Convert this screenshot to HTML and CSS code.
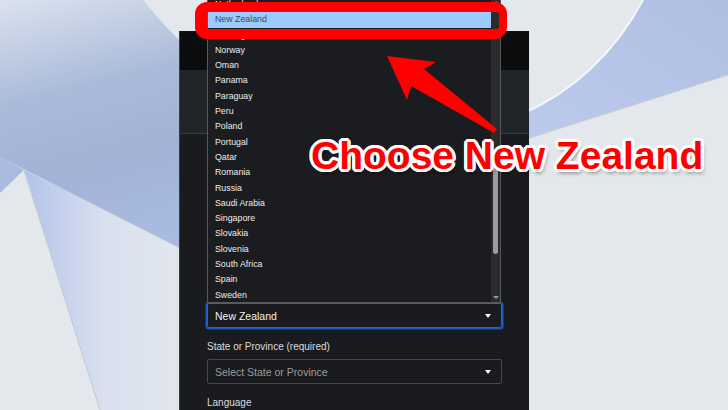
FILE: index.html
```html
<!DOCTYPE html>
<html lang="en">
<head>
  <meta charset="UTF-8" />
  <meta name="viewport" content="width=device-width, initial-scale=1.0"/>
  <title>Choose New Zealand</title>
  <link rel="stylesheet" href="styles.css">
</head>
<body>
  <svg class="wallpaper" width="728" height="410" viewBox="0 0 728 410">
    <defs>
      <linearGradient id="bandLeft" x1="0" y1="0" x2="0.2" y2="1">
        <stop offset="0" stop-color="#dbe2ee"/>
        <stop offset="0.4" stop-color="#aabbda"/>
        <stop offset="0.7" stop-color="#a1b2d5"/>
        <stop offset="1" stop-color="#a9bae0"/>
      </linearGradient>
      <linearGradient id="wedge" x1="0" y1="0" x2="1" y2="0">
        <stop offset="0" stop-color="#b2c3ea"/>
        <stop offset="0.45" stop-color="#d9e0ee"/>
        <stop offset="1" stop-color="#e4e8ee"/>
      </linearGradient>
      <linearGradient id="bandRight" x1="0" y1="1" x2="1" y2="0">
        <stop offset="0" stop-color="#bccbec"/>
        <stop offset="1" stop-color="#afbfe2"/>
      </linearGradient>
    </defs>
    <rect width="728" height="410" fill="#e4e7eb"/>
    <path d="M0 0 H143 Q165 28 200 60 L200 258 L0 157 Z" fill="url(#bandLeft)"/>
    <path d="M0 157 L24 170 L0 193 Z" fill="#a9bbe0"/>
    <path d="M24 170 L200 258 L200 410 L100 410 Z" fill="url(#wedge)"/>
    <path d="M24 170 L100 410" stroke="#c3c7cf" stroke-width="1"/>
    <path d="M0 157 L200 258" stroke="#b9c0cc" stroke-width="1"/>
    <path d="M643 0 Q600 80 520 115 L520 141 L728 75 V0 Z" fill="url(#bandRight)"/>
    <path d="M643 0 Q600 80 520 115" stroke="#f5f7f9" stroke-width="2" fill="none"/>
    <path d="M520 141 L728 75" stroke="#c8ccd3" stroke-width="1"/>
  </svg>

  <div class="window">
    <div class="titlebar"></div>
    <div class="toolbar"></div>
    <div class="form">
      <div class="field">
        <div class="select focused">
          <span>New Zealand</span>
          <span class="caret"></span>
        </div>
      </div>
      <div class="field">
        <label>State or Province (required)</label>
        <div class="select">
          <span class="placeholder">Select State or Province</span>
          <span class="caret"></span>
        </div>
      </div>
      <div class="field">
        <label>Language</label>
      </div>
    </div>
  </div>

  <div class="dropdown">
    <ul class="options">
      <li>Netherlands</li>
      <li class="active">New Zealand</li>
      <li>Nicaragua</li>
      <li>Norway</li>
      <li>Oman</li>
      <li>Panama</li>
      <li>Paraguay</li>
      <li>Peru</li>
      <li>Poland</li>
      <li>Portugal</li>
      <li>Qatar</li>
      <li>Romania</li>
      <li>Russia</li>
      <li>Saudi Arabia</li>
      <li>Singapore</li>
      <li>Slovakia</li>
      <li>Slovenia</li>
      <li>South Africa</li>
      <li>Spain</li>
      <li>Sweden</li>
    </ul>
    <div class="scrollbar">
      <span class="arrow-up"></span>
      <span class="thumb"></span>
      <span class="arrow-down"></span>
    </div>
  </div>

  <div class="callout-box"></div>
  <svg class="callout-arrow" width="728" height="410" viewBox="0 0 728 410">
    <polygon points="387,56 436,62 424,69 497,129 494,133 411,86 407,100" fill="#ff0000"/>
  </svg>
  <div class="callout-text">Choose New Zealand</div>
</body>
</html>
```

FILE: styles.css
```css
* {
  margin: 0;
  padding: 0;
  box-sizing: border-box;
}

body {
  font-family: 'Liberation Sans', Arial, sans-serif;
  width: 728px;
  height: 410px;
  overflow: hidden;
  padding: 31px 0 0 179px;
  position: relative;
  background: #e4e7eb;
}

.wallpaper {
  position: absolute;
  top: 0;
  left: 0;
  z-index: 0;
}

.window {
  position: relative;
  z-index: 1;
  width: 350px;
  height: 379px;
  overflow: hidden;
  background-color: #1a1b1e;
  border-left: 1px solid #3a3b3e;
}

.titlebar {
  height: 39px;
  background-color: #0b0c0e;
}

.toolbar {
  height: 64px;
  background-color: #212428;
  border-bottom: 1px solid #393c40;
}

.form {
  padding: 169px 27px 0 27px;
  display: flex;
  flex-direction: column;
  gap: 13px;
}

label {
  display: block;
  font-size: 10px;
  line-height: 12px;
  color: #dcdcdc;
  margin-bottom: 6px;
}

.select {
  height: 25px;
  border: 1px solid #45484c;
  border-radius: 2px;
  display: flex;
  align-items: center;
  justify-content: space-between;
  padding: 0 7px 0 7px;
  font-size: 10.5px;
  color: #f0f0f0;
}

.select.focused {
  border-color: #5a5d62;
  box-shadow: 0 0 0 1.5px #1c55c4;
}

.placeholder {
  color: #9a9b9d;
}

.caret {
  width: 0;
  height: 0;
  border-left: 3.5px solid transparent;
  border-right: 3.5px solid transparent;
  border-top: 4px solid #f2f2f2;
  margin-right: 3px;
}

/* open list of the country select */
.dropdown {
  position: absolute;
  z-index: 2;
  left: 207px;
  top: -4px;
  width: 294px;
  height: 307px;
  background-color: #1b1c1f;
  border: 1px solid #57585b;
  display: flex;
}

.options {
  list-style: none;
  flex: 1;
  overflow: hidden;
}

.options li {
  height: 15.3px;
  line-height: 15.3px;
  padding-left: 7px;
  font-size: 8.8px;
  color: #ececec;
  white-space: nowrap;
}

.options li.active {
  background-color: #9ccaff;
  color: #3b4553;
}

.scrollbar {
  width: 9px;
  background-color: #2b2b2c;
  display: flex;
  flex-direction: column;
  align-items: center;
}

.arrow-up,
.arrow-down {
  width: 0;
  height: 0;
  border-left: 3px solid transparent;
  border-right: 3px solid transparent;
}

.arrow-up {
  margin-top: 4px;
  border-bottom: 3px solid #9a9a9a;
}

.thumb {
  width: 5px;
  height: 87px;
  margin-top: 163px;
  border-radius: 3px;
  background-color: #9c9c9c;
}

.arrow-down {
  margin-top: auto;
  margin-bottom: 3px;
  border-top: 3px solid #9a9a9a;
}

/* annotation */
.callout-box {
  position: absolute;
  z-index: 3;
  left: 195px;
  top: 2px;
  width: 312px;
  height: 37px;
  border: 10px solid #ff0000;
  border-left-width: 12px;
  border-right-width: 8px;
  border-radius: 12px;
}

.callout-arrow {
  position: absolute;
  z-index: 3;
  top: 0;
  left: 0;
}

.callout-text {
  position: absolute;
  z-index: 4;
  left: 311px;
  top: 134px;
  font-size: 39px;
  font-weight: bold;
  color: #ff0000;
  white-space: nowrap;
  text-shadow:
    3px 0 0 #fff, -3px 0 0 #fff, 0 3px 0 #fff, 0 -3px 0 #fff,
    2px 2px 0 #fff, -2px 2px 0 #fff, 2px -2px 0 #fff, -2px -2px 0 #fff,
    3px 1px 0 #fff, -3px 1px 0 #fff, 3px -1px 0 #fff, -3px -1px 0 #fff,
    1px 3px 0 #fff, -1px 3px 0 #fff, 1px -3px 0 #fff, -1px -3px 0 #fff,
    2px 4px 4px rgba(0, 0, 0, 0.45);
}
```
